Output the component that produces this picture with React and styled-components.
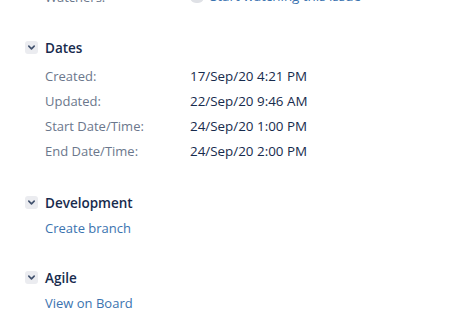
import styled, { createGlobalStyle } from "styled-components";

const GlobalStyle = createGlobalStyle`
  html, body {
    margin: 0;
    padding: 0;
    background: #ffffff;
    overflow: hidden;
  }
  body {
    font-family: "Open Sans", "Noto Sans", "Liberation Sans", sans-serif;
    font-size: 13px;
    color: #172b4d;
  }
`;

const Page = styled.div`
  width: 452px;
  height: 334px;
  overflow: hidden;
  padding-left: 25px;
  box-sizing: border-box;
`;

const Clipped = styled.div`
  margin-top: -16px;
  padding-left: 20px;
`;

const Module = styled.section`
  margin-bottom: ${({ $gap }) => $gap}px;
`;

const Header = styled.div`
  display: flex;
  align-items: center;
  gap: 7px;
  height: 25px;
  margin-top: ${({ $top }) => $top || 0}px;
`;

const Toggle = styled.span`
  display: inline-flex;
  align-items: center;
  justify-content: center;
  width: 13px;
  height: 13px;
  border-radius: 3px;
  background: #ebecf0;
  svg {
    width: 9px;
    height: 9px;
  }
`;

const Title = styled.h4`
  margin: 0;
  font-size: 13.5px;
  font-weight: 600;
  color: #172b4d;
`;

const Body = styled.div`
  padding-left: 20px;
  padding-top: ${({ $pad }) => $pad || 0}px;
`;

const Row = styled.div`
  display: grid;
  grid-template-columns: 145px 1fr;
  height: 25px;
  align-items: center;
`;

const Label = styled.span`
  color: #6b778c;
`;

const Value = styled.span`
  color: #172b4d;
  font-size: 13.4px;
  display: inline-flex;
  align-items: center;
  gap: 6px;
`;

const Link = styled.a`
  color: #3b73af;
  text-decoration: none;
  line-height: 25px;
  display: block;
`;

const Chevron = () => (
  <svg viewBox="0 0 10 10">
    <path d="M2 3.5 L5 6.5 L8 3.5" fill="none" stroke="#42526e" strokeWidth="1.8" strokeLinecap="round" strokeLinejoin="round" />
  </svg>
);

const EyeDot = styled.span`
  width: 14px;
  height: 12px;
  border-radius: 6px;
  background: #dfe1e6;
`;

function Section({ title, top, pad, gap, children }) {
  return (
    <Module $gap={gap}>
      <Header $top={top}>
        <Toggle>
          <Chevron />
        </Toggle>
        <Title>{title}</Title>
      </Header>
      <Body $pad={pad}>{children}</Body>
    </Module>
  );
}

const dates = [
  ["Created:", "17/Sep/20 4:21 PM"],
  ["Updated:", "22/Sep/20 9:46 AM"],
  ["Start Date/Time:", "24/Sep/20 1:00 PM"],
  ["End Date/Time:", "24/Sep/20 2:00 PM"],
];

export default function App() {
  return (
    <Page>
      <GlobalStyle />
      <Clipped>
        <Row>
          <Label>Watchers:</Label>
          <Value>
            <EyeDot />
            <Link as="span">Start watching this issue</Link>
          </Value>
        </Row>
      </Clipped>
      <Section title="Dates" top={26} pad={3} gap={27}>
        {dates.map(([k, v]) => (
          <Row key={k}>
            <Label>{k}</Label>
            <Value>{v}</Value>
          </Row>
        ))}
      </Section>
      <Section title="Development" pad={1} gap={24}>
        <Link href="#">Create branch</Link>
      </Section>
      <Section title="Agile" pad={1} gap={0}>
        <Link href="#">View on Board</Link>
      </Section>
    </Page>
  );
}
